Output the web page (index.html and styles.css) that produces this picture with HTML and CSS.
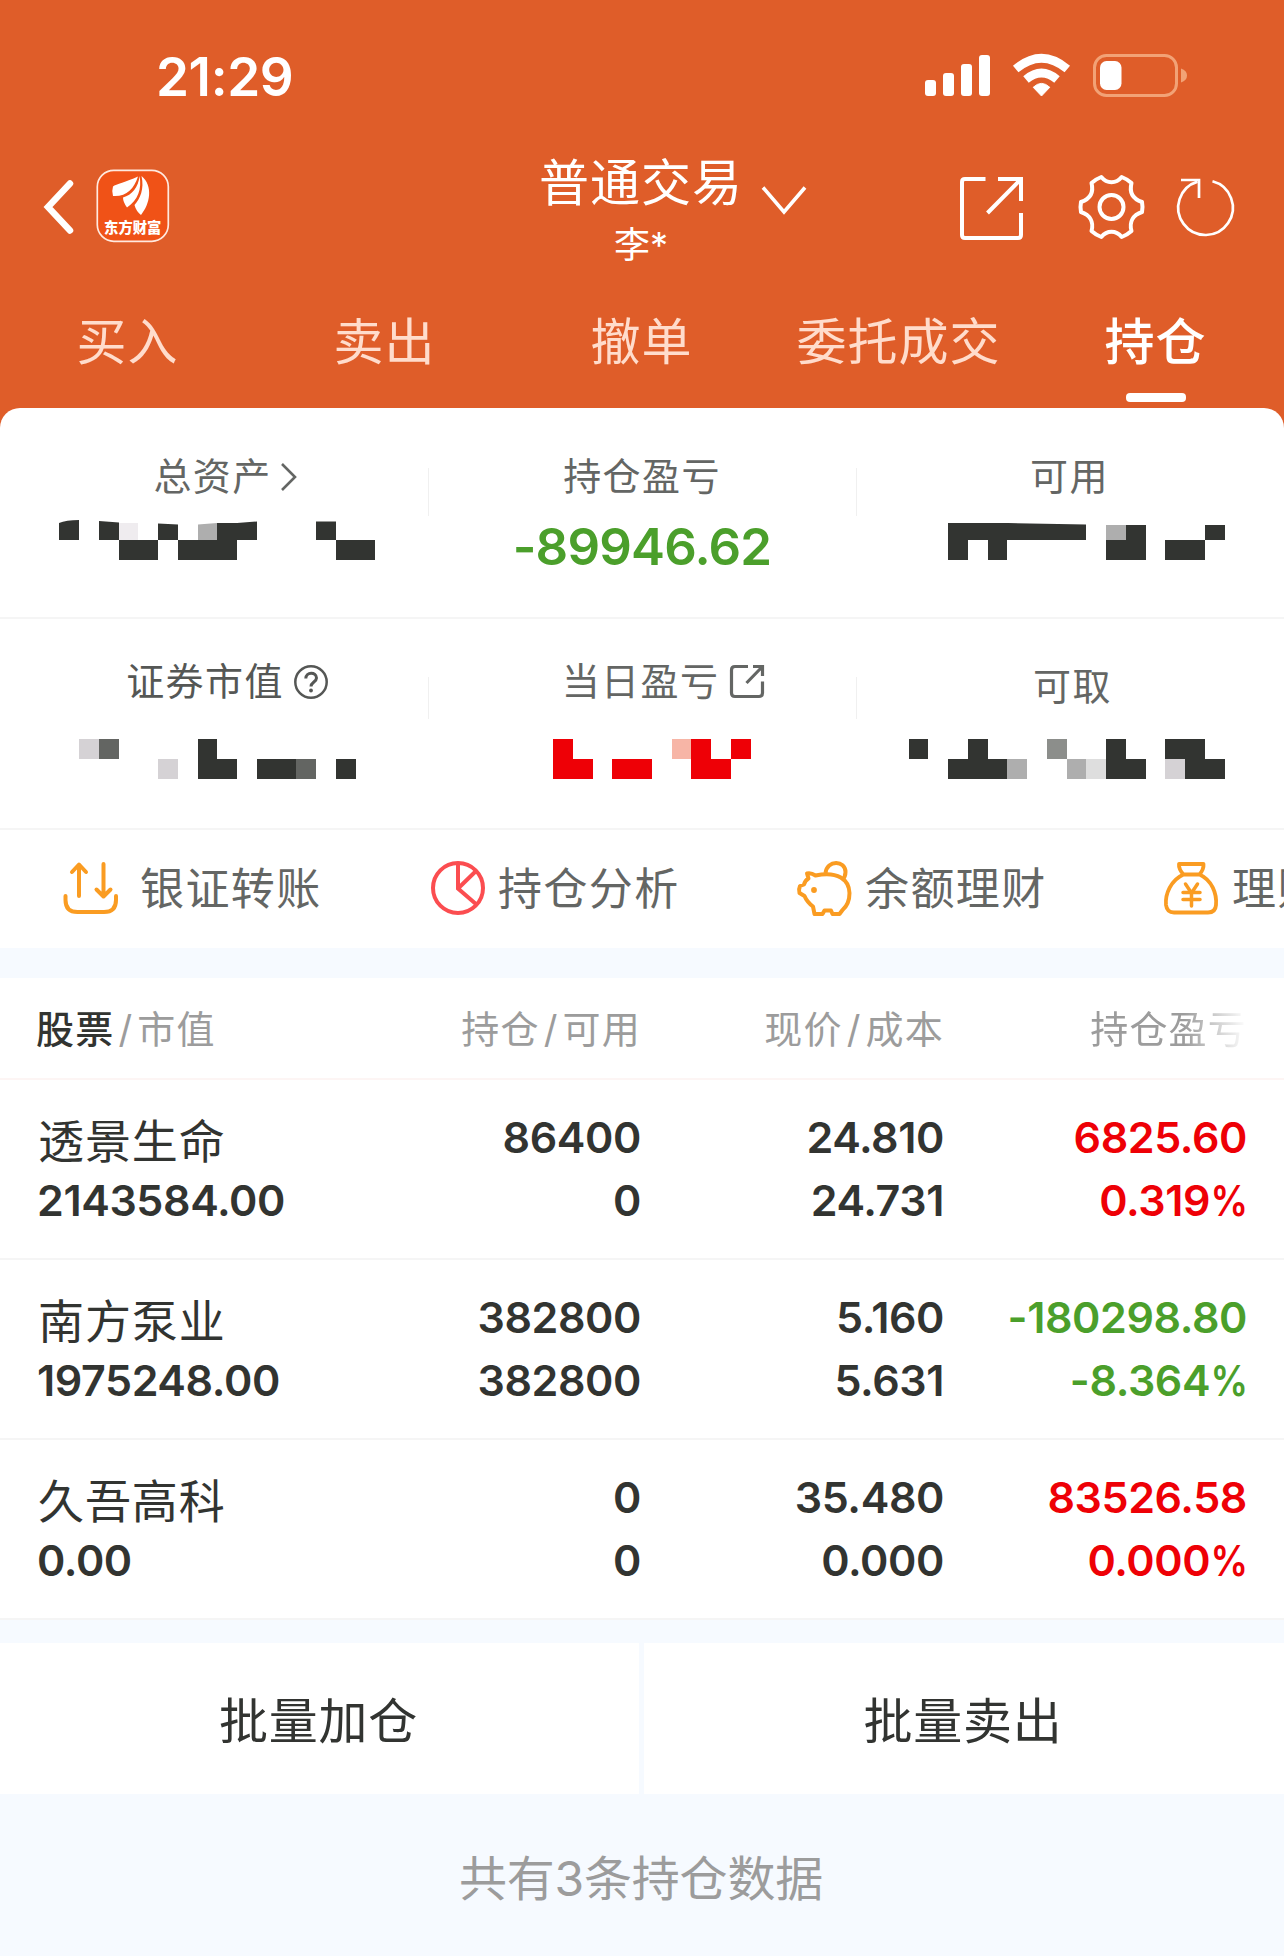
FILE: index.html
```html
<!DOCTYPE html>
<html lang="zh-CN">
<head>
<meta charset="utf-8">
<title>持仓</title>
<link rel="stylesheet" href="styles.css">
</head>
<body>
<header class="header">
  <div class="status">
    <span class="time">21:29</span>
    <svg class="status-icons" width="264" height="46" viewBox="924 52 264 46">
      <g fill="#fff">
        <rect x="925" y="80" width="11" height="16" rx="3"/>
        <rect x="943" y="73" width="11" height="23" rx="3"/>
        <rect x="961" y="64" width="11" height="32" rx="3"/>
        <rect x="979" y="55" width="11" height="41" rx="3"/>
        <path d="M1041.500 96 L1033.200 87.300 Q1041.500 79.500 1049.800 87.300 Z" stroke="#fff" stroke-width="1" stroke-linejoin="round"/>
      </g>
      <g fill="none" stroke="#fff" stroke-width="8.500">
        <path d="M1026 79.500 Q1041.500 66.500 1057 79.500"/>
        <path d="M1015.700 69 Q1041.500 47.500 1067.300 69"/>
      </g>
      <rect x="1094.500" y="55.500" width="82" height="40" rx="12" fill="none" stroke="#f2a276" stroke-width="3"/>
      <rect x="1100" y="61" width="21.500" height="29" rx="6.500" fill="#fff"/>
      <path d="M1181 68.500 Q1187 70.500 1187 75.500 Q1187 80.500 1181 82.500Z" fill="#f2a276"/>
    </svg>
  </div>
  <nav class="nav">
    <div class="nav-left">
      <svg width="32" height="56" viewBox="0 0 32 56"><path d="M27 4.500 L5 28 L27 51.500" fill="none" stroke="#fff" stroke-width="6.500" stroke-linecap="round" stroke-linejoin="miter"/></svg>
      <svg class="logo" width="74" height="74" viewBox="0 0 74 74">
        <rect x="1.300" y="1.300" width="71" height="71" rx="16.500" fill="#f05217" stroke="#ffe9df" stroke-width="1.700"/>
        <g fill="#fff">
          <path d="M42 7.500 C30 13 20 15 17 17.500 Q15.500 22 17 27 C30 28 38 20 42 7.500Z"/>
          <path d="M43.500 7 C42.500 18 36 26 27 28.500 Q27 33 31 38.500 C42 31 46 20 43.500 7Z"/>
          <path d="M45.500 7 C48.500 20 44 30 38.500 36 Q40 42 45 46 C54 35 57.500 17 45.500 7Z"/>
          <text x="36.700" y="63.500" text-anchor="middle" class="logo-text">东方财富</text>
        </g>
      </svg>
    </div>
    <div class="account">
      <div class="account-name">普通交易</div>
      <div class="account-user">李*</div>
    </div>
    <svg class="account-arrow" width="48" height="32" viewBox="0 0 48 32"><path d="M3 3.500 L24 28 L45 3.500" fill="none" stroke="#fff" stroke-width="3.600"/></svg>
    <svg class="nav-icons" width="280" height="68" viewBox="958 173 280 68">
      <g fill="none" stroke="#fff" stroke-width="4">
        <path d="M985.500 179 H965 Q962 179 962 182 V235 Q962 238 965 238 H1018 Q1021 238 1021 235 V213"/>
        <path d="M998 179 H1021 V201 M1020 180 L987.500 213"/>
        <path stroke-linejoin="round" d="M1101.300 177 C1107 184 1116 184 1121.700 177 Q1127 179 1131.500 183 C1129 193 1133 199 1142 202 Q1143 207 1142 212 C1133 215 1129 222 1131.500 231 Q1127 235 1121.700 237 C1116 230 1107 230 1101.300 237 Q1096 235 1091.500 231 C1094 222 1090 215 1081 212 Q1080 207 1081 202 C1090 199 1094 193 1091.500 183 Q1096 179 1101.300 177Z"/>
        <circle cx="1111.500" cy="207" r="12"/>
        <g stroke-width="2.700"><path d="M1212.500 181.300 A27.300 27.300 0 1 1 1197.500 181.600"/><path d="M1181 180 H1199 V198"/></g>
      </g>
    </svg>
  </nav>
  <div class="tabs">
    <span>买入</span><span>卖出</span><span>撤单</span><span>委托成交</span><span class="active">持仓</span>
  </div>
</header>

<main>
  <section class="assets">
    <div class="asset-row">
      <div class="asset">
        <div class="label shift-total">总资产<svg width="18" height="30" viewBox="0 0 18 30"><path d="M2 2 L15 15 L2 28" fill="none" stroke="#646664" stroke-width="2.600"/></svg></div>
        <svg class="mosaic" width="429" height="46" viewBox="0 517 429 46" fill="#323431">
          <path d="M59 523 Q66 520 79 520 V540 H59Z M99 521 L119 522.500 V540 H99Z M119 540h39v20h-39z M158 523.500 L178 524.500 V540 H158Z M178 540h59v20h-59z M217 523 H237 L257 521.500 V540 H217Z M316 521.500h20V540h-20z M336 540h39v20h-39z"/>
          <path fill="#efecef" d="M119 523h19v17h-19z"/><path fill="#aeaeae" d="M198 524.500 L217 523V540H198z"/>
        </svg>
      </div>
      <div class="asset">
        <div class="label">持仓盈亏</div>
        <div class="total down">-89946.62</div>
      </div>
      <div class="asset">
        <div class="label">可用</div>
        <svg class="mosaic" width="427" height="46" viewBox="857 517 427 46" fill="#323431">
          <path d="M948 523 H1008 L1086 524.500 V540 H1007 V560 H988 V540 H968 V560 H948Z M1126 525h20v35h-40v-20h20z M1165 540h40v20h-40z M1205 525h20v15h-20z"/>
          <path fill="#aeaeae" d="M1106 525h20v15h-20z"/>
        </svg>
      </div>
    </div>
    <div class="asset-row second">
      <div class="asset">
        <div class="label shift-value">证券市值<svg width="36" height="36" viewBox="0 0 36 36" fill="none" stroke="#555755" stroke-width="2.500"><circle cx="18" cy="18" r="15.700"/><path d="M12.800 14.500 C12.800 7.500 23.500 7.500 23.500 14 C23.500 18 18 18 18 22.500" stroke-width="3"/><circle cx="18" cy="26.500" r="1.900" fill="#555755" stroke="none"/></svg></div>
        <svg class="mosaic" width="429" height="46" viewBox="0 736 429 46" fill="#323431">
          <path d="M198 739h19v20h20v20h-39z M257 759h39v20h-39z M336 759h20v20h-20z"/>
          <path fill="#d5d2d5" d="M79 739h20v20h-20z M158 759h20v20h-20z"/><path fill="#636562" d="M99 739h20v20h-20z M296 759h20v20h-20z"/>
        </svg>
      </div>
      <div class="asset">
        <div class="label shift-day">当日盈亏<svg width="36" height="36" viewBox="0 0 36 36" fill="none" stroke="#646664" stroke-width="3.200"><path d="M19 2.500 H6 Q2.500 2.500 2.500 6 V29 Q2.500 32.500 6 32.500 H30 Q33.500 32.500 33.500 29 V17.500"/><path d="M24 2.500 H33.500 V12 M33 3 L17.500 19"/></svg></div>
        <svg class="mosaic" width="427" height="46" viewBox="429 736 427 46" fill="#ee0006">
          <path d="M553 739h20v20h20v20h-40z M612 759h40v20h-40z M691 739h20v20h20v20h-40z M731 739h20v20h-20z"/><path fill="#f7b5a6" d="M672 739h19v20h-19z"/>
        </svg>
      </div>
      <div class="asset">
        <div class="label shift-cash">可取</div>
        <svg class="mosaic" width="427" height="46" viewBox="857 736 427 46" fill="#323431">
          <path d="M909 739h19v20h-19z M968 739h20v20h19v20h-59v-20h20z M1106 739h20v20h20v20h-40z M1165 739h40v20h20v20h-40v-20h-20z"/>
          <path fill="#aeaeae" d="M1007 759h20v20h-20z M1067 759h19v20h-19z"/><path fill="#8c8e8b" d="M1047 739h20v20h-20z"/><path fill="#dedede" d="M1086 759h20v20h-20z"/><path fill="#d5d2d5" d="M1165 759h20v20h-20z"/>
        </svg>
      </div>
    </div>
  </section>

  <section class="actions">
    <div class="action">
      <svg width="60" height="60" viewBox="0 0 60 60" fill="none" stroke="#fa9c22" stroke-width="4" stroke-linecap="round" stroke-linejoin="round"><path d="M4.500 37 V41 Q4.500 53 16.500 53 H43 Q55 53 55 41 V37"/><path d="M18 37 V6 M11 13 L18 5.500 L25 13 M42.500 5 V37 M35.500 30.500 L42.500 37.500 L49.500 30.500"/></svg>
      <span class="wide">银证转账</span>
    </div>
    <div class="action">
      <svg width="60" height="60" viewBox="0 0 60 60" fill="none" stroke="#fb4d50" stroke-width="4"><circle cx="30" cy="29" r="25"/><path d="M30 4 V29.500 L48.500 45.500 M30 29.500 L48 12"/></svg>
      <span>持仓分析</span>
    </div>
    <div class="action">
      <svg width="60" height="60" viewBox="0 0 60 60" fill="none" stroke="#fa9c22" stroke-width="4" stroke-linejoin="round"><path d="M30.500 14 C32 0.500 50.500 1 50.500 13 C50.500 17 49.500 19 47 21.500"/><path d="M12 14.500 Q16 13.500 20.500 16.500 C43 12 54 20.500 54.500 34 C54.500 42 51 48 47.500 51 L44.500 55 H37.500 L36 51.500 H29.500 L27.500 55 H19.500 L18 47.500 Q12 43 9.500 37 L4.500 34 Q3.500 30 5 27 L9 25.500 Q10 21.500 13.500 19.500 Z"/><circle cx="19" cy="31" r="2.900" fill="#fa9c22" stroke="none"/></svg>
      <span>余额理财</span>
    </div>
    <div class="action">
      <svg width="60" height="60" viewBox="0 0 60 60" fill="none" stroke="#fa9c22" stroke-width="3.800" stroke-linejoin="round" stroke-linecap="round"><path d="M17 5 H41.500 Q42 10 37.500 15.500 H21.500 Q16.500 10 17 5Z M21.500 15.500 C9 21 3 35 4 46 Q5 53.500 12 53.500 H46 Q53.500 53.500 54 46 C55 35 50 21 37.500 15.500"/><path d="M23.500 25 L29.500 34 L35.500 25 M29.500 34 V47 M21 33.500 H38 M21 40.500 H38" stroke-width="3.500"/></svg>
      <span>理财</span>
    </div>
  </section>

  <section class="holdings">
    <div class="row head">
      <div><b>股票</b><i>/</i>市值</div><div>持仓<i>/</i>可用</div><div>现价<i>/</i>成本</div><div class="faded">持仓盈亏</div>
    </div>
    <div class="row">
      <div><p class="name">透景生命</p><p>2143584.00</p></div>
      <div><p>86400</p><p>0</p></div>
      <div><p>24.810</p><p>24.731</p></div>
      <div class="up"><p>6825.60</p><p>0.319<span class="pct">%</span></p></div>
    </div>
    <div class="row">
      <div><p class="name">南方泵业</p><p>1975248.00</p></div>
      <div><p>382800</p><p>382800</p></div>
      <div><p>5.160</p><p>5.631</p></div>
      <div class="down"><p>-180298.80</p><p>-8.364<span class="pct">%</span></p></div>
    </div>
    <div class="row">
      <div><p class="name">久吾高科</p><p>0.00</p></div>
      <div><p>0</p><p>0</p></div>
      <div><p>35.480</p><p>0.000</p></div>
      <div class="up"><p>83526.58</p><p>0.000<span class="pct">%</span></p></div>
    </div>
  </section>

  <section class="batch">
    <div>批量加仓</div><div>批量卖出</div>
  </section>
  <footer class="footer">共有3条持仓数据</footer>
</main>
</body>
</html>
```
FILE: styles.css
```css
* { box-sizing: border-box; }
body {
  margin: 0;
  width: 1284px;
  height: 1956px;
  overflow: hidden;
  background: #f6faff;
  color: #323431;
  font-family: Inter, "Noto Sans CJK SC", sans-serif;
}
svg { display: block; flex: none; }
p { margin: 0; }
i { font-style: normal; }

.header { height: 428px; background: #df5d29; color: #fff; }
.status { display: flex; justify-content: space-between; height: 98px; padding: 52px 96px 0 156px; }
.time { font-size: 53px; font-weight: 600; line-height: 51px; letter-spacing: -0.4px; }

.nav { display: flex; height: 204px; padding: 52px 45px 0 43px; }
.nav-left { display: flex; gap: 21px; width: 489px; padding-top: 19px; align-items: flex-start; }
.nav-left svg:first-child { margin-top: 10px; }
.logo-text { font: 900 14.300px "Noto Sans CJK SC", sans-serif; }
.account { width: 218px; text-align: center; }
.account-name { font-size: 50px; line-height: 66px; letter-spacing: 1px; white-space: nowrap; }
.account-user { font-size: 36px; line-height: 58px; }
.account-arrow { margin: 34px 150px 0 10px; }
.nav-icons { margin-top: 23px; }

.tabs { display: grid; grid-template-columns: repeat(5, 257px); width: 1284px; height: 106px; text-align: center; font-size: 50px; line-height: 80px; letter-spacing: 1px; color: #ffdccc; }
.tabs span { display: flex; flex-direction: column; align-items: center; padding-right: 2px; white-space: nowrap; }
.tabs .active { color: #fff; font-weight: 500; }
.tabs .active::after { content: ""; width: 60px; height: 9px; margin-top: 11px; border-radius: 4px; background: #fff; }

.assets { margin-top: -20px; background: #fff; border-radius: 20px 20px 0 0; }
.asset-row { display: grid; grid-template-columns: 429px 428px 427px; height: 211px; padding-top: 43px; border-bottom: 2px solid #f5f5f5; }
.asset { position: relative; }
.asset + .asset::before { content: ""; position: absolute; left: -1px; top: 17px; width: 1px; height: 48px; background: #f0f0f0; }
.second .asset + .asset::before { top: 21px; height: 42px; }
.label { display: flex; align-items: center; justify-content: center; height: 44px; padding-right: 2px; font-size: 38px; letter-spacing: 1.4px; color: #646664; }
.label svg { margin-top: 7px; }
.asset .mosaic { margin-top: 22px; }
.shift-total { gap: 8px; padding-left: 24px; }
.shift-value { gap: 9px; padding-left: 28px; color: #555755; }
.shift-day { gap: 10px; padding-left: 43px; }
.shift-cash { position: relative; top: 5px; padding-left: 6px; }
.total { font-size: 51px; font-weight: 600; line-height: 60px; letter-spacing: -0.8px; margin-top: 22px; padding-right: 2px; text-align: center; }
.up { color: #ee0006; }
.down { color: #4b9f2b; }

.second { padding-top: 37px; height: 211px; }
.second .asset .mosaic { margin-top: 36px; }

.actions { display: flex; height: 118px; padding: 29px 0 0 60px; background: #fff; overflow: hidden; }
.action { display: flex; flex: none; width: 367px; gap: 10px; font-size: 44px; letter-spacing: 1.4px; line-height: 61px; color: #646664; white-space: nowrap; }
.action svg { margin-left: 1px; }
.wide { margin-left: 9px; }

.holdings { margin-top: 30px; background: #fff; }
.row { display: grid; grid-template-columns: 338px 303px 303px 303px; height: 180px; padding: 26px 0 0 0; border-bottom: 2px solid #f5f5f5; font-size: 43px; font-weight: 560; letter-spacing: -0.4px; line-height: 63px; text-align: right; }
.row > :first-child { padding-left: 37px; text-align: left; }
.row .name { font-size: 46px; font-weight: 400; letter-spacing: 0.9px; padding: 4px 0 0 1px; margin-bottom: -4px; }
.pct { display: inline-block; margin-left: -6px; transform: translateX(1px) scaleX(.87); transform-origin: right; }
.head { height: 102px; padding-top: 20px; border-color: #fdf5f4; font-size: 38px; font-weight: 400; color: #9c9c9c; letter-spacing: 1.2px; white-space: nowrap; }
.head > :first-child { padding-left: 36px; }
.head b { font-weight: 500; color: #323431; }
.head i { margin: 0 4px; }
.faded { -webkit-mask-image: linear-gradient(to right, #000 240px, transparent 303px); mask-image: linear-gradient(to right, #000 240px, transparent 303px); }

.batch { display: grid; grid-template-columns: 639px 640px; grid-template-rows: 151px; gap: 5px; margin-top: 23px; font-size: 49px; letter-spacing: 0.8px; line-height: 157px; text-align: center; }
.batch div { background: #fff; height: 151px; padding-right: 2px; }
.footer { padding: 54px 2px 0 0; text-align: center; font-size: 48px; letter-spacing: -0.2px; line-height: 62px; color: #9c9c9c; }
```
